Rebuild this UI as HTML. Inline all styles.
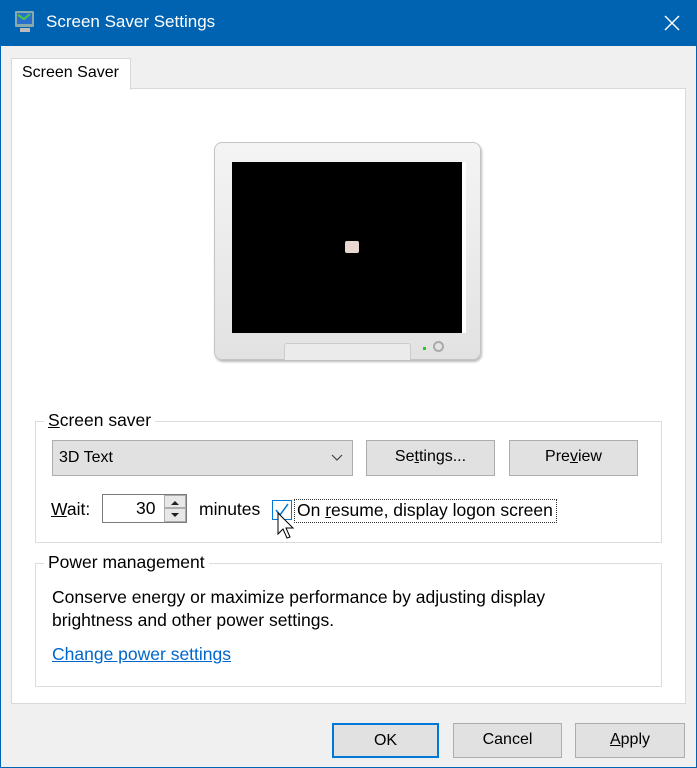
<!DOCTYPE html>
<html><head><style>
*{margin:0;padding:0;box-sizing:border-box}
body{width:697px;height:768px;background:#0063b1;font-family:"Liberation Sans",sans-serif;font-size:16px;color:#000;position:relative;overflow:hidden}
.a{position:absolute}
.t{font-size:17.5px}
.btn{position:absolute;background:#e1e1e1;border:1px solid #adadad;text-align:center;font-size:16px}
u{text-decoration:underline}
</style></head><body>
<div class="a" style="left:0;top:0;width:697px;height:46px;background:#0063b1"></div>
<svg class="a" style="left:14px;top:10px" width="22" height="24" viewBox="0 0 22 24"><rect x="1" y="1" width="19" height="16" rx="1" fill="#8aa"/><rect x="3" y="3" width="15" height="11" fill="#2a6fd0"/><path d="M4 5l6 4 6-5" stroke="#4c4" stroke-width="2" fill="none"/><rect x="6" y="18" width="10" height="4" fill="#bbb"/></svg>
<div class="a" style="left:46px;top:12px;color:#fff;font-size:17px">Screen Saver Settings</div>
<svg class="a" style="left:664px;top:15px" width="16" height="16"><path d="M1 1L15 15M15 1L1 15" stroke="#fff" stroke-width="1.5"/></svg>
<div class="a" style="left:1px;top:46px;width:695px;height:721px;background:#f0f0f0"></div>
<div class="a" style="left:11px;top:88px;width:675px;height:616px;background:#fff;border:1px solid #d9d9d9"></div>
<div class="a" style="left:11px;top:58px;width:120px;height:32px;background:#fff;border:1px solid #d9d9d9;border-bottom:none"></div>
<div class="a" style="left:22px;top:64px">Screen Saver</div>
<!-- monitor -->
<div class="a" style="left:214px;top:142px;width:267px;height:218px;background:linear-gradient(#f4f4f4,#e2e2e2);border:1px solid #c4c4c4;border-radius:8px;box-shadow:1px 2px 2px #bbb"></div>
<div class="a" style="left:232px;top:162px;width:230px;height:171px;background:#000"></div>
<div class="a" style="left:462px;top:162px;width:4px;height:171px;background:#fff"></div>
<div class="a" style="left:345px;top:241px;width:14px;height:12px;background:#e8d8d0;border-radius:2px"></div>
<div class="a" style="left:284px;top:343px;width:127px;height:17px;border:1px solid #ccc;border-bottom:none;border-radius:3px 3px 0 0;background:#ebebeb"></div>
<div class="a" style="left:423px;top:347px;width:3px;height:3px;background:#2c2"></div>
<div class="a" style="left:433px;top:341px;width:11px;height:11px;border:2px solid #aaa;border-radius:50%"></div>
<!-- group 1 -->
<div class="a" style="left:35px;top:421px;width:627px;height:122px;border:1px solid #dcdcdc"></div>
<div class="a t" style="left:44px;top:410px;background:#fff;padding:0 4px"><u>S</u>creen saver</div>
<div class="btn t" style="left:52px;top:440px;width:301px;height:36px;text-align:left;padding:8px 0 0 6px">3D Text</div>
<svg class="a" style="left:331px;top:454px" width="12" height="8"><path d="M1 1l5 5 5-5" stroke="#444" fill="none" stroke-width="1.2"/></svg>
<div class="btn t" style="left:366px;top:440px;width:129px;height:36px;padding-top:7px">Se<u>t</u>tings...</div>
<div class="btn t" style="left:509px;top:440px;width:129px;height:36px;padding-top:7px">Pre<u>v</u>iew</div>
<div class="a t" style="left:51px;top:499px"><u>W</u>ait:</div>
<div class="a" style="left:102px;top:494px;width:85px;height:29px;border:1px solid #7a7a7a;background:#fff"></div>
<div class="a t" style="left:136px;top:498px">30</div>
<div class="a" style="left:164px;top:495px;width:22px;height:13px;border:1px solid #adadad;background:#e8e8e8"></div>
<div class="a" style="left:164px;top:508px;width:22px;height:14px;border:1px solid #adadad;background:#e8e8e8"></div>
<svg class="a" style="left:170px;top:498px" width="10" height="22"><path d="M1 7h8L5 3z M1 15h8L5 19z" fill="#222"/></svg>
<div class="a t" style="left:199px;top:499px">minutes</div>
<div class="a" style="left:272px;top:500px;width:20px;height:20px;border:1px solid #0078d7;background:#fff"></div>
<svg class="a" style="left:274px;top:502px" width="16" height="16"><path d="M2 8l4 5 8-11" stroke="#0078d7" fill="none" stroke-width="1.5"/></svg>
<div class="a" style="left:294px;top:499px;width:263px;height:24px;border:1px dotted #333"></div>
<div class="a t" style="left:297px;top:500px">On <u>r</u>esume, display logon screen</div>
<svg class="a" style="left:277px;top:512px" width="20" height="30"><path d="M1 1v21l5-5 4 9 3-1-4-9h7z" fill="#fff" stroke="#000"/></svg>
<!-- group 2 -->
<div class="a" style="left:35px;top:563px;width:627px;height:124px;border:1px solid #dcdcdc"></div>
<div class="a t" style="left:44px;top:552px;background:#fff;padding:0 4px">Power management</div>
<div class="a t" style="left:52px;top:586px;line-height:23px">Conserve energy or maximize performance by adjusting display<br>brightness and other power settings.</div>
<div class="a t" style="left:52px;top:644px;color:#0066cc;text-decoration:underline">Change power settings</div>
<!-- bottom -->
<div class="btn t" style="left:332px;top:723px;width:107px;height:35px;padding-top:7px;border:2px solid #0078d7">OK</div>
<div class="btn t" style="left:453px;top:723px;width:109px;height:35px;padding-top:7px">Cancel</div>
<div class="btn t" style="left:575px;top:723px;width:110px;height:35px;padding-top:7px"><u>A</u>pply</div>
</body></html>
